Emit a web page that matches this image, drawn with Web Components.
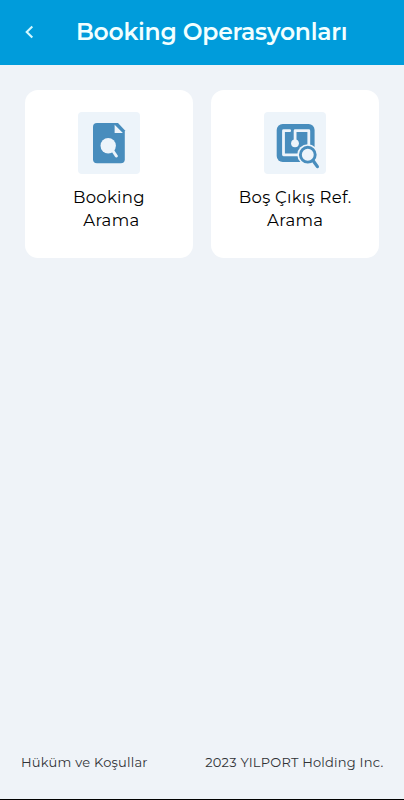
<!DOCTYPE html>
<html lang="tr">
<head>
<meta charset="utf-8">
<meta name="viewport" content="width=device-width, initial-scale=1">
<title>Booking Operasyonları</title>
<style>
  body {
    margin: 0;
    font-family: Montserrat, Inter, "Noto Sans", sans-serif;
  }
  .indent {
    padding-left: 5px;
  }
</style>
</head>
<body>
<booking-app>
  <app-header slot="header">Booking Operasyonları</app-header>
  <menu-card icon="document">Booking<br><span class="indent">Arama</span></menu-card>
  <menu-card icon="container">Boş Çıkış Ref.<br>Arama</menu-card>
  <app-footer slot="footer">
    <span slot="terms">Hüküm ve Koşullar</span>
    <span slot="company">2023 YILPORT Holding Inc.</span>
  </app-footer>
</booking-app>

<script>
const icons = {
  document: `
    <path fill="#488dbd" d="M19 11H40L46.8 18.2V47.2Q46.8 51.2 42.8 51.2H19Q15 51.2 15 47.2V15Q15 11 19 11Z"/>
    <path fill="#edf4fa" d="M36.6 12.8V21H44.9Z"/>
    <circle cx="30.2" cy="33.7" r="7.7" fill="#edf4fa"/>
    <path d="M34 37.5L38.3 44" stroke="#edf4fa" stroke-width="3" stroke-linecap="round"/>`,
  container: `
    <rect x="12.7" y="12" width="37.9" height="38" rx="6" fill="#488dbd"/>
    <g fill="none" stroke="#edf4fa" stroke-width="2.8" stroke-linejoin="round">
      <path d="M25.7 18.7H19.5V42.8H35" stroke-linecap="round"/>
      <path d="M31.1 31V18.7H44.8V34"/>
    </g>
    <circle cx="31" cy="31.3" r="3.9" fill="#edf4fa"/>
    <circle cx="43.8" cy="42.7" r="10.5" fill="#edf4fa"/>
    <path d="M49 49L53.7 54.7" stroke="#edf4fa" stroke-width="5" stroke-linecap="round"/>
    <circle cx="43.8" cy="42.7" r="7.4" fill="none" stroke="#488dbd" stroke-width="2.9"/>
    <path d="M49 48.5L53.4 54.6" stroke="#488dbd" stroke-width="3.2" stroke-linecap="round"/>`,
};

const appTemplate = document.createElement("template");
appTemplate.innerHTML = `
    <style>
      :host {
        display: flex;
        flex-direction: column;
        box-sizing: border-box;
        height: 100vh;
        background: #eff3f8;
        border-bottom: 1px solid #000;
      }
      main {
        flex: 1;
        display: grid;
        grid-template-columns: 1fr 1fr;
        align-content: start;
        gap: 18.5px;
        padding: 25.4px 25px;
      }
    </style>
    <slot name="header"></slot>
    <main><slot></slot></main>
    <slot name="footer"></slot>
    `;

const headerTemplate = document.createElement("template");
headerTemplate.innerHTML = `
    <style>
      :host {
        display: flex;
        align-items: center;
        box-sizing: border-box;
        height: 65px;
        padding: 0 24px 2px;
        background: #009cdb;
        color: #f2ffff;
      }
      button {
        display: flex;
        padding: 0;
        border: 0;
        background: none;
        color: #d2f8ff;
      }
      h1 {
        margin: 0 0 0 41px;
        font-size: 23.5px;
        font-weight: 600;
        line-height: 30px;
        letter-spacing: -0.26px;
        white-space: nowrap;
      }
    </style>
    <button aria-label="Geri">
      <svg width="11" height="14" viewBox="0 0 11 14" fill="none" stroke="currentColor" stroke-width="2.1">
        <path d="M8.3 1.4L2.7 7L8.3 12.6"/>
      </svg>
    </button>
    <h1><slot></slot></h1>
    `;

const cardTemplate = document.createElement("template");
cardTemplate.innerHTML = `
    <style>
      :host {
        display: flex;
        flex-direction: column;
        align-items: center;
        box-sizing: border-box;
        height: 167.5px;
        padding-top: 21.4px;
        border-radius: 13px;
        background: #fff;
        color: #000;
      }
      .icon {
        width: 62.5px;
        height: 62.5px;
        border-radius: 4px;
        background: #edf4fa;
      }
      svg {
        display: block;
      }
      .label {
        margin-top: 12px;
        font-size: 16.5px;
        line-height: 23px;
        letter-spacing: 0.28px;
        text-align: center;
        white-space: nowrap;
      }
    </style>
    <div class="icon"><svg width="62.5" height="62.5" viewBox="0 0 62.5 62.5"></svg></div>
    <div class="label"><slot></slot></div>
    `;

const footerTemplate = document.createElement("template");
footerTemplate.innerHTML = `
    <style>
      :host {
        display: flex;
        justify-content: space-between;
        padding: 0 20.5px 27px 21px;
        color: #303236;
        font-size: 13px;
        line-height: 20px;
        letter-spacing: 0.22px;
        white-space: nowrap;
      }
    </style>
    <slot name="terms"></slot>
    <slot name="company"></slot>
    `;

class BookingApp extends HTMLElement {
  constructor() {
    super();
    this.attachShadow({ mode: "open" });
    this.shadowRoot.appendChild(appTemplate.content.cloneNode(true));
  }
}

class AppHeader extends HTMLElement {
  constructor() {
    super();
    this.attachShadow({ mode: "open" });
    this.shadowRoot.appendChild(headerTemplate.content.cloneNode(true));
  }
}

class MenuCard extends HTMLElement {
  constructor() {
    super();
    this.attachShadow({ mode: "open" });
    this.shadowRoot.appendChild(cardTemplate.content.cloneNode(true));
  }

  connectedCallback() {
    const icon = this.getAttribute("icon");
    this.shadowRoot.querySelector("svg").innerHTML = icons[icon] || "";
  }
}

class AppFooter extends HTMLElement {
  constructor() {
    super();
    this.attachShadow({ mode: "open" });
    this.shadowRoot.appendChild(footerTemplate.content.cloneNode(true));
  }
}

window.customElements.define("booking-app", BookingApp);
window.customElements.define("app-header", AppHeader);
window.customElements.define("menu-card", MenuCard);
window.customElements.define("app-footer", AppFooter);
</script>
</body>
</html>
